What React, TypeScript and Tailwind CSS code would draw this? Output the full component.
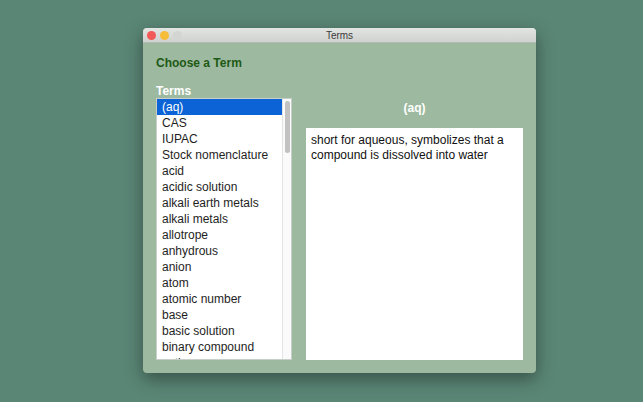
import React from "react";

const terms = [
  "(aq)",
  "CAS",
  "IUPAC",
  "Stock nomenclature",
  "acid",
  "acidic solution",
  "alkali earth metals",
  "alkali metals",
  "allotrope",
  "anhydrous",
  "anion",
  "atom",
  "atomic number",
  "base",
  "basic solution",
  "binary compound",
  "cation",
];

export default function App() {
  return (
    <div
      className="w-[643px] h-[402px] bg-[#5a8676] overflow-hidden pt-[28px] pl-[143px]"
      style={{ fontFamily: '"Liberation Sans", Arial, sans-serif' }}
    >
      <div className="w-[393px] h-[345px] rounded-[4px] bg-[#9db9a0] shadow-[0_6px_18px_rgba(0,0,0,0.4)] flex flex-col overflow-hidden">
        {/* Title bar */}
        <div className="relative h-[15px] bg-gradient-to-b from-[#e3e5e3] to-[#cfd2cf] border-b border-[#b5bab5] flex items-center justify-center">
          <div className="absolute left-[4px] top-[3px] flex gap-[4px]">
            <div className="w-[9px] h-[9px] rounded-full bg-[#f25a57]" />
            <div className="w-[9px] h-[9px] rounded-full bg-[#f6bd3a]" />
            <div className="w-[9px] h-[9px] rounded-full bg-[#d3d5d3]" />
          </div>
          <span className="text-[10px] leading-none text-[#3a3a3a] mt-[2px]">Terms</span>
        </div>
        {/* Content */}
        <div className="flex flex-col pl-[13px] pr-[13px]">
          <div className="mt-[13px] text-[12px] font-bold text-[#1d5a14] leading-[14px]">
            Choose a Term
          </div>
          <div className="mt-[14px] text-[12px] font-bold text-white leading-[14px]">
            Terms
          </div>
          <div className="flex">
            {/* List */}
            <div className="w-[136px] h-[262px] bg-white border border-[#c8cfc8] flex overflow-hidden">
              <div className="flex-1 flex flex-col overflow-hidden">
                {terms.map((t, i) => (
                  <div
                    key={t}
                    className={
                      i === 0
                        ? "h-[16px] shrink-0 pl-[5px] text-[12px] leading-[16px] bg-[#0b63d6] text-white"
                        : "h-[16px] shrink-0 pl-[5px] text-[12px] leading-[16px] text-[#1e1e1e]"
                    }
                  >
                    {t}
                  </div>
                ))}
              </div>
              <div className="w-[9px] h-full bg-[#fafafa] border-l border-[#e4e4e4] pt-[2px] flex justify-center">
                <div className="w-[5px] h-[52px] rounded-full bg-[#c2c2c2]" />
              </div>
            </div>
            {/* Detail */}
            <div className="ml-[14px] flex flex-col w-[217px]">
              <div className="h-[20px] flex items-center justify-center text-[12px] font-bold text-white">
                (aq)
              </div>
              <div className="mt-[10px] h-[232px] bg-white px-[5px] pt-[5px] text-[12px] leading-[15px] text-[#111]">
                short for aqueous, symbolizes that a compound is dissolved into water
              </div>
            </div>
          </div>
        </div>
      </div>
    </div>
  );
}
